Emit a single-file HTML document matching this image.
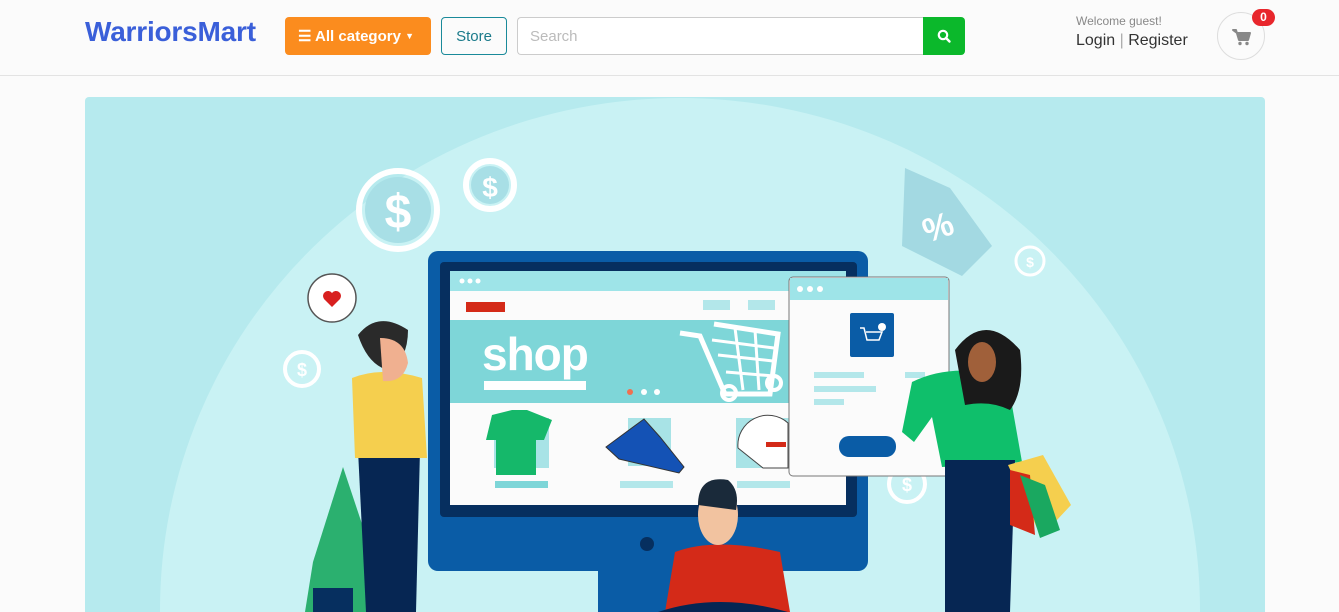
<!DOCTYPE html>
<html style="overflow:hidden;width:1339px;height:612px"><head><meta charset="utf-8"><style>
*{box-sizing:border-box;margin:0;padding:0}
body{width:1339px;height:612px;overflow:hidden;background:#fbfbfb;font-family:"Liberation Sans",sans-serif;position:relative}
.hdr{position:absolute;left:0;top:0;width:1339px;height:76px;background:#fbfbfb;border-bottom:1px solid #e3e3e3}
.logo{position:absolute;left:85px;top:16px;font-size:28px;font-weight:bold;color:#3a5fd9;letter-spacing:-0.2px}
.cat{position:absolute;left:285px;top:17px;width:146px;height:38px;background:#fb8c1e;border-radius:4px;color:#fff;font-weight:bold;font-size:15px;line-height:38px;padding-left:13px}
.store{position:absolute;left:441px;top:17px;width:66px;height:38px;border:1px solid #1a8a9a;border-radius:4px;color:#1a7a8a;font-size:15px;line-height:38px;text-align:center}
.search{position:absolute;left:517px;top:17px;width:407px;height:38px;border:1px solid #ccc;border-right:none;border-radius:4px 0 0 4px;background:#fff;color:#bbb;font-size:15px;line-height:38px;padding-left:12px}
.sbtn{position:absolute;left:923px;top:17px;width:42px;height:38px;background:#0bb82b;border-radius:0 4px 4px 0}
.wel{position:absolute;left:1076px;top:14px;font-size:12px;color:#888}
.lr{position:absolute;left:1076px;top:32px;font-size:16px;color:#333}
.cart{position:absolute;left:1217px;top:12px;width:48px;height:48px;border:1px solid #ddd;border-radius:50%}
.badge{position:absolute;left:1252px;top:9px;width:23px;height:17px;background:#e8262c;border-radius:9px;color:#fff;font-size:12px;font-weight:bold;text-align:center;line-height:17px}
.ban{position:absolute;left:85px;top:97px;width:1180px;height:515px;border-radius:4px 4px 0 0;overflow:hidden}
</style></head><body>
<div class="hdr">
<div class="logo">WarriorsMart</div>
<div class="cat">&#9776; All category <span style="font-size:9px;vertical-align:2px">&#9660;</span></div>
<div class="store">Store</div>
<div class="search">Search</div>
<div class="sbtn"><svg width="42" height="38"><circle cx="20" cy="18" r="4.2" fill="none" stroke="#fff" stroke-width="2.2"/><path d="M23 21l3.5 3.5" stroke="#fff" stroke-width="2.4" stroke-linecap="round"/></svg></div>
<div class="wel">Welcome guest!</div>
<div class="lr">Login <span style="color:#aaa">|</span> Register</div>
<div class="cart"><svg width="48" height="48"><path d="M15 17h3l3 10h9l2-7H19z" fill="#888" stroke="#888" stroke-width="2" stroke-linejoin="round"/><circle cx="22" cy="30.5" r="1.7" fill="#888"/><circle cx="29" cy="30.5" r="1.7" fill="#888"/></svg></div>
<div class="badge">0</div>
</div>
<div class="ban">
<svg width="1180" height="515" viewBox="85 97 1180 515">
<rect x="85" y="97" width="1180" height="515" fill="#b6eaee"/>
<ellipse cx="680" cy="610" rx="520" ry="512" fill="#c9f2f4"/>
<g fill="none" stroke="#fff" stroke-width="6"><circle cx="398" cy="210" r="39"/><circle cx="490" cy="185" r="24"/><circle cx="302" cy="369" r="17" stroke-width="4"/><circle cx="1030" cy="261" r="14" stroke-width="3"/><circle cx="907" cy="484" r="18" stroke-width="4"/></g>
<circle cx="398" cy="210" r="33" fill="#a8dfe6"/><circle cx="490" cy="185" r="19" fill="#a8dfe6"/>
<text x="398" y="228" font-size="48" font-weight="bold" fill="#fff" text-anchor="middle" font-family="Liberation Sans">$</text>
<text x="490" y="197" font-size="28" font-weight="bold" fill="#fff" text-anchor="middle" font-family="Liberation Sans">$</text>
<text x="302" y="376" font-size="18" font-weight="bold" fill="#fff" text-anchor="middle" font-family="Liberation Sans">$</text>
<text x="1030" y="267" font-size="14" font-weight="bold" fill="#fff" text-anchor="middle" font-family="Liberation Sans">$</text>
<text x="907" y="491" font-size="18" font-weight="bold" fill="#fff" text-anchor="middle" font-family="Liberation Sans">$</text>
<path d="M905 168l45 20 42 58-30 30-60-30z" fill="#a3d9e2"/>
<text x="942" y="238" font-size="34" font-weight="bold" fill="#fff" text-anchor="middle" font-family="Liberation Sans" transform="rotate(-20 942 238)">%</text>
<circle cx="332" cy="298" r="24" fill="#fff" stroke="#555" stroke-width="1.5"/>
<path d="M332 307l-8-8a5 5 0 0 1 8-6 5 5 0 0 1 8 6z" fill="#d8201f"/>
<rect x="428" y="251" width="440" height="320" rx="10" fill="#0a5ca6"/>
<rect x="440" y="262" width="417" height="255" rx="4" fill="#062f5f"/>
<rect x="450" y="271" width="396" height="234" fill="#fbfbfb"/>
<rect x="450" y="271" width="396" height="20" fill="#9ee4e8"/>
<g fill="#fff"><circle cx="462" cy="281" r="2.5"/><circle cx="470" cy="281" r="2.5"/><circle cx="478" cy="281" r="2.5"/></g>
<rect x="466" y="302" width="39" height="10" fill="#d42a18"/>
<rect x="703" y="300" width="27" height="10" fill="#b3e7ea"/><rect x="748" y="300" width="27" height="10" fill="#b3e7ea"/>
<rect x="450" y="320" width="396" height="83" fill="#7ed6d8"/>
<text x="482" y="370" font-size="46" font-weight="bold" fill="#fff" font-family="Liberation Sans" letter-spacing="-1">shop</text>
<rect x="484" y="381" width="102" height="9" fill="#fff"/>
<circle cx="630" cy="392" r="3" fill="#f07050"/><circle cx="644" cy="392" r="3" fill="#fff"/><circle cx="657" cy="392" r="3" fill="#fff"/>
<path d="M680 333l20 3 25 58h45l8-60-64-10" fill="none" stroke="#fff" stroke-width="5"/>
<path d="M712 340l62 8M718 355l55 6M726 372l48 4M735 328l8 62M755 330l4 60" stroke="#fff" stroke-width="3"/>
<circle cx="729" cy="393" r="7" fill="none" stroke="#fff" stroke-width="4"/><circle cx="774" cy="383" r="7" fill="none" stroke="#fff" stroke-width="4"/>
<rect x="494" y="418" width="55" height="50" fill="#a8e3e6"/><path d="M492 415l20-5h15l25 10-8 20h-8v35h-40v-35h-10z" fill="#15b86a"/>
<rect x="628" y="418" width="43" height="48" fill="#a8e3e6"/><path d="M606 447l38-28 16 18 24 30-5 6-60-14z" fill="#1452b5" stroke="#333" stroke-width="1"/>
<rect x="736" y="418" width="55" height="50" fill="#a8e3e6"/><path d="M738 448a30 30 0 0 1 50-25v45h-25z" fill="#fff" stroke="#444" stroke-width="1"/><rect x="766" y="442" width="20" height="5" fill="#d42a18"/>
<rect x="495" y="481" width="53" height="7" fill="#7ed6d8"/><rect x="620" y="481" width="53" height="7" fill="#b3e7ea"/><rect x="737" y="481" width="53" height="7" fill="#b3e7ea"/>
<circle cx="647" cy="544" r="7" fill="#062f5f"/>
<rect x="598" y="570" width="100" height="42" fill="#0a5ca6"/>
<rect x="789" y="277" width="160" height="199" rx="4" fill="#fbfbfb" stroke="#777" stroke-width="1"/>
<rect x="790" y="278" width="158" height="22" fill="#9ee4e8"/>
<g fill="#fff"><circle cx="800" cy="289" r="3"/><circle cx="810" cy="289" r="3"/><circle cx="820" cy="289" r="3"/></g>
<rect x="850" y="313" width="44" height="44" rx="2" fill="#0a5ca6"/><circle cx="882" cy="327" r="4" fill="#fff"/>
<path d="M860 328h4l3 12h12l3-8h-16" fill="none" stroke="#fff" stroke-width="1.5"/>
<rect x="814" y="372" width="50" height="6" fill="#b3e7ea"/><rect x="814" y="386" width="62" height="6" fill="#b3e7ea"/><rect x="814" y="399" width="30" height="6" fill="#b3e7ea"/><rect x="905" y="372" width="20" height="6" fill="#b3e7ea"/>
<rect x="839" y="436" width="57" height="21" rx="10" fill="#0a5ca6"/>
<path d="M305 612l8-50 30-95 20 60 8 85z" fill="#1aa860" opacity=".9"/>
<rect x="313" y="588" width="40" height="24" fill="#062f5f"/>
<path d="M358 450h62l-4 162h-50z" fill="#062653"/>
<path d="M352 378q30-12 70 0l5 80h-72z" fill="#f5cf4e"/>
<path d="M358 335q20-25 50-5 0 30-20 40-20-5-30-35z" fill="#2a2a2a"/>
<path d="M380 338q25 0 28 25-5 20-25 18z" fill="#f0b090"/>
<path d="M912 382q40-20 95-5l15 85-80 5-10-50-18 25-12-10z" fill="#0fbf6b"/>
<path d="M945 460h70l-5 152h-65z" fill="#062653"/>
<path d="M955 350q30-40 65 0 5 40-10 60-20-10-45-5z" fill="#1a1a1a"/>
<ellipse cx="982" cy="362" rx="14" ry="20" fill="#a0603a"/>
<path d="M1008 465l35-10 28 50-30 32z" fill="#f5cf4e"/><path d="M1010 470l20 5 5 60-25-10z" fill="#d42a18"/><path d="M1020 475l25 10 15 45-20 8z" fill="#1aa860"/>
<path d="M665 612l10-60q40-15 105 0l10 60z" fill="#d42a18"/>
<ellipse cx="718" cy="515" rx="20" ry="30" fill="#f2c3a0"/>
<path d="M698 505q0-30 30-25 12 10 8 30z" fill="#1a2a3a"/>
<path d="M658 612q60-20 130 0z" fill="#062653"/>
</svg>
</div>
</body></html>
